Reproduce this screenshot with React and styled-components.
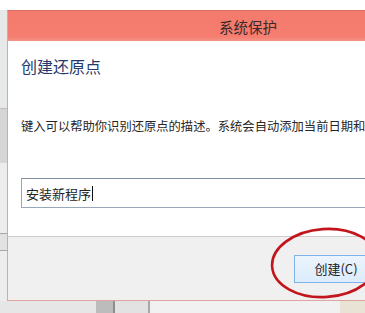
import styled, { createGlobalStyle } from "styled-components";

const GlobalStyle = createGlobalStyle`
  html, body {
    margin: 0;
    padding: 0;
    background: #ffffff;
    overflow: hidden;
  }
  * {
    box-sizing: border-box;
  }
`;

const FONT = `"Noto Sans CJK SC", "Noto Sans", "Liberation Sans", sans-serif`;

// the window behind the dialog, only a sliver of it shows
const behindBands = [
  { h: 98, bg: "#e7e9e9" },
  { h: 1, bg: "#bdbdbd" },
  { h: 54, bg: "#d6d6d6" },
  { h: 70, bg: "#ededed" },
  { h: 1, bg: "#a9a9a9" },
  { h: 16, bg: "#e2e2e2" },
  { h: 1, bg: "#a9a9a9" },
  { h: 50, bg: "#ededed" },
];

const bottomBands = [
  { w: 96, bg: "#e6e6e6" },
  { w: 17, bg: "#bcbcbc" },
  { w: 2, bg: "#8e8e8e" },
  { w: 33, bg: "#e2e2e2" },
  { w: 2, bg: "#a8a8a8" },
  { w: 190, bg: "#f1f1f1" },
  { w: 25, bg: "#e9e3d6" },
];

const Screen = styled.div`
  position: relative;
  width: 365px;
  height: 313px;
  overflow: hidden;
  background: #ffffff;
  display: flex;
  flex-direction: column;
  font-family: ${FONT};
`;

const TopGap = styled.div`
  height: 10px;
  flex-shrink: 0;
`;

const Middle = styled.div`
  display: flex;
  height: 291px;
  flex-shrink: 0;
`;

const BehindStrip = styled.div`
  width: 7px;
  flex-shrink: 0;
  display: flex;
  flex-direction: column;
`;

const Band = styled.div`
  flex-shrink: 0;
  height: ${(p) => (p.$h ? `${p.$h}px` : "100%")};
  width: ${(p) => (p.$w ? `${p.$w}px` : "100%")};
  background: ${(p) => p.$bg};
`;

const Dialog = styled.div`
  width: 482px;
  flex-shrink: 0;
  display: flex;
  flex-direction: column;
  border: 1px solid #dfa3a0;
  border-top-color: #d86e63;
  background: #ffffff;
`;

const TitleBar = styled.div`
  height: 30px;
  flex-shrink: 0;
  display: flex;
  align-items: center;
  justify-content: center;
  background: linear-gradient(#f37a6c, #f57e70 85%, #f39487);
  color: #3a2a2a;
  font-size: 14.5px;
`;

const Body = styled.div`
  flex: 1;
  padding: 14px 13px 0 13px;
  display: flex;
  flex-direction: column;
  overflow: hidden;
`;

const Heading = styled.div`
  font-size: 16px;
  line-height: 22px;
  color: #243a6c;
`;

const Hint = styled.div`
  margin-top: 40px;
  font-size: 12.3px;
  line-height: 18px;
  color: #262626;
  white-space: nowrap;
`;

const Field = styled.div`
  margin-top: 43px;
  height: 30px;
  width: 100%;
  border: 1px solid #9aa7b9;
  border-top-color: #7f8da3;
  display: flex;
  align-items: center;
  padding-left: 4px;
  font-size: 13px;
  color: #222222;
`;

const Caret = styled.span`
  display: inline-block;
  width: 1px;
  height: 15px;
  background: #111111;
  margin-left: 1px;
`;

const Footer = styled.div`
  height: 64px;
  flex-shrink: 0;
  border-top: 1px solid #cdcdcd;
  background: #f0f0f0;
  display: flex;
  align-items: center;
  justify-content: flex-end;
  gap: 8px;
  padding-right: 18px;
`;

const Button = styled.button`
  width: 84px;
  height: 28px;
  border: 1px solid #7eb4ea;
  background: linear-gradient(#ecf4fc, #dcecfc);
  font-family: ${FONT};
  font-size: 13px;
  color: #222222;
  padding: 0;
`;

const BottomStrip = styled.div`
  height: 12px;
  flex-shrink: 0;
  display: flex;
`;

const Mark = styled.svg`
  position: absolute;
  left: 262px;
  top: 222px;
  pointer-events: none;
`;

export default function App() {
  return (
    <>
      <GlobalStyle />
      <Screen>
        <TopGap />
        <Middle>
          <BehindStrip>
            {behindBands.map((b, i) => (
              <Band key={i} $h={b.h} $bg={b.bg} />
            ))}
          </BehindStrip>
          <Dialog>
            <TitleBar>系统保护</TitleBar>
            <Body>
              <Heading>创建还原点</Heading>
              <Hint>键入可以帮助你识别还原点的描述。系统会自动添加当前日期和时间。</Hint>
              <Field>
                安装新程序
                <Caret />
              </Field>
            </Body>
            <Footer>
              <Button>创建(C)</Button>
              <Button>取消</Button>
            </Footer>
          </Dialog>
        </Middle>
        <BottomStrip>
          {bottomBands.map((b, i) => (
            <Band key={i} $w={b.w} $bg={b.bg} />
          ))}
        </BottomStrip>
        <Mark width="130" height="84" viewBox="0 0 130 84">
          <ellipse
            cx="63"
            cy="41"
            rx="53"
            ry="34"
            transform="rotate(-4 63 41)"
            fill="none"
            stroke="#c3161c"
            strokeWidth="2.6"
          />
        </Mark>
      </Screen>
    </>
  );
}
